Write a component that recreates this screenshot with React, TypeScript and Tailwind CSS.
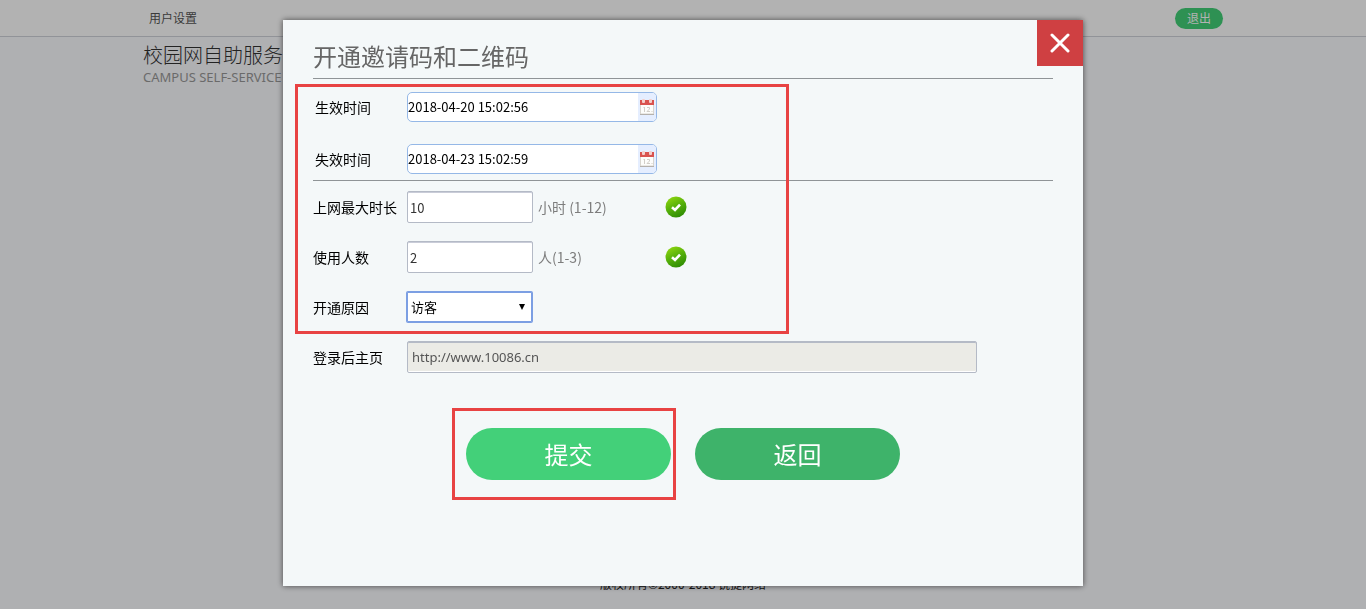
import { useId, useState } from 'react';
import type { ReactNode } from 'react';

const CalendarIcon = () => (
  <svg viewBox="0 0 16 16" className="h-4 w-4" aria-hidden="true">
    <rect x="1.5" y="3.5" width="13" height="11.5" fill="#fdfdfb" stroke="#d8d5cf" />
    <rect x="1" y="15" width="14" height="1" fill="#b5b1ac" />
    <rect x="1" y="1" width="14" height="5" fill="#d9534f" />
    <rect x="3" y="0" width="3" height="4" rx="1" fill="#f3cfcb" />
    <rect x="10" y="0" width="3" height="4" rx="1" fill="#f3cfcb" />
    <path d="M4.5 9l1-1v5M8 8.5h2.500v1.500L8 12.500h3M13 13v-1" fill="none" stroke="#d2cec8" />
  </svg>
);

const CheckBadge = () => {
  const id = useId();
  return (
    <svg viewBox="0 0 22 22" className="h-[22px] w-[22px]" role="img" aria-label="OK">
      <defs>
        <linearGradient id={id} x1="0.2" y1="0" x2="0.7" y2="1">
          <stop offset="0" stopColor="#8ed60f" />
          <stop offset="0.5" stopColor="#55b00a" />
          <stop offset="1" stopColor="#2c8a04" />
        </linearGradient>
      </defs>
      <circle cx="11" cy="11" r="10.500" fill={`url(#${id})`} />
      <path d="M7 11.300l3 2.700 5-5.300" fill="none" stroke="#fff" strokeWidth="2.600" />
    </svg>
  );
};

type RowProps = { label: string; htmlFor: string; children: ReactNode };

const Row = ({ label, htmlFor, children }: RowProps) => (
  <div className="flex h-[50px] items-center">
    <label htmlFor={htmlFor} className="w-[94px] shrink-0">{label}</label>
    {children}
  </div>
);

const DateRow = ({ label, id, initial }: { label: string; id: string; initial: string }) => {
  const [value, setValue] = useState(initial);
  return (
    <div className="flex h-[30px] items-center">
      <label htmlFor={id} className="w-[94px] shrink-0 pl-0.5">{label}</label>
      <div className="flex h-full w-[250px] overflow-hidden rounded-[5px] border border-[#95b8e7] bg-white">
        <input
          id={id}
          type="text"
          value={value}
          onChange={(e) => setValue(e.target.value)}
          className="min-w-0 flex-1 text-[13px] outline-none"
        />
        <button type="button" aria-label="选择日期" className="flex w-[18px] items-center justify-center bg-[#e5eeff]">
          <CalendarIcon />
        </button>
      </div>
    </div>
  );
};

const App = () => {
  const [hours, setHours] = useState('10');
  const [people, setPeople] = useState('2');

  const numberInput = 'h-8 w-[126px] rounded-[2px] border border-[#b4bac6] bg-white px-0.5 text-[13px] text-[#333] shadow-[inset_0_1px_0_#c9ccd8] outline-none';

  return (
    <div className='flex min-h-screen flex-col bg-[#fbfcff] font-["Noto_Sans_CJK_SC",sans-serif] text-[#222]'>
      {/* Top bar */}
      <header className="border-b border-[#d0d3da] bg-white">
        <div className="mx-auto flex h-9 max-w-[1080px] items-center justify-between text-xs">
          <a href="#settings" className="pl-1.5 text-[#555]">用户设置</a>
          <button type="button" className="h-[21px] rounded-full bg-[#42d078] px-3 text-white">退出</button>
        </div>
      </header>

      {/* Logo */}
      <div className="mx-auto w-full max-w-[1080px] pt-1.5">
        <div className="text-xl leading-6 font-light text-[#333]">校园网自助服务</div>
        <div className='font-["Noto_Sans"] text-[13px] leading-5 text-[#999]'>CAMPUS SELF-SERVICE</div>
      </div>

      <footer className="mt-auto pb-4 text-center text-xs leading-[18px]">版权所有©2000-2018 锐捷网络</footer>

      {/* Dialog */}
      <div className="fixed inset-0 flex items-start justify-center bg-black/30 pt-5">
        <div
          role="dialog"
          aria-labelledby="dialog-title"
          className="w-full max-w-[800px] bg-[#f4f8f9] pb-[86px] text-sm text-black shadow-[0_0_6px_rgba(0,0,0,0.6)]"
        >
          <div className="flex h-[58px] items-start justify-between pl-[30px]">
            <h1 id="dialog-title" className="pt-4 text-2xl leading-10 text-[#666]">开通邀请码和二维码</h1>
            <button type="button" aria-label="关闭" className="flex h-[46px] w-[46px] items-center justify-center bg-[#cf4042]">
              <svg viewBox="0 0 20 20" className="h-5 w-5" fill="none" stroke="#fff" strokeWidth="3" strokeLinecap="round">
                <path d="M2 2l16 16M18 2L2 18" />
              </svg>
            </button>
          </div>

          <form className="px-[30px]" onSubmit={(e) => e.preventDefault()}>
            <div className="relative">
              <div className="mb-px flex flex-col gap-[22px] border-y border-[#8f9497] pt-[13px] pb-1.5">
                <DateRow label="生效时间" id="start" initial="2018-04-20 15:02:56" />
                <DateRow label="失效时间" id="end" initial="2018-04-23 15:02:59" />
              </div>

              <Row label="上网最大时长" htmlFor="hours">
                <input id="hours" type="text" value={hours} onChange={(e) => setHours(e.target.value)} className={numberInput} />
                <span className="w-[132px] pl-[5px] text-[#7d7d7d]">小时 (1-12)</span>
                <CheckBadge />
              </Row>
              <Row label="使用人数" htmlFor="people">
                <input id="people" type="text" value={people} onChange={(e) => setPeople(e.target.value)} className={numberInput} />
                <span className="w-[132px] pl-[5px] text-[#7d7d7d]">人(1-3)</span>
                <CheckBadge />
              </Row>
              <Row label="开通原因" htmlFor="reason">
                <div className="relative">
                  <select
                    id="reason"
                    className="h-[30px] w-[125px] appearance-none rounded-[1px] border border-[#7c9fe3] bg-white pl-[3px] text-[13px] ring-1 ring-[#7c9fe3] outline-none"
                  >
                    <option>访客</option>
                  </select>
                  <svg viewBox="0 0 6 6" className="pointer-events-none absolute top-3 right-[7px] h-1.5 w-1.5" aria-hidden="true">
                    <path d="M0 0h6L3 6z" />
                  </svg>
                </div>
              </Row>

              {/* Highlight frame around the fields */}
              <div className="pointer-events-none absolute top-1.5 -bottom-0.5 -left-[18px] w-[494px] border-3 border-[#e84343]" />
            </div>

            <Row label="登录后主页" htmlFor="homepage">
              <input
                id="homepage"
                type="text"
                readOnly
                value="http://www.10086.cn"
                className='h-8 w-[570px] rounded-[2px] border border-[#b4bac6] bg-[#ebebe6] px-1 font-["Noto_Sans"] text-[13px] text-[#555] shadow-[inset_0_1px_0_#b4bac6,inset_0_-1px_0_#fff] outline-none'
              />
            </Row>

            <div className="mt-[26px] flex items-center gap-[19px] pl-[139px] text-2xl text-white">
              <div className="border-3 border-[#e84343] py-[17px] pr-0.5 pl-[11px]">
                <button type="submit" className="h-[52px] w-[205px] rounded-full bg-[#43d079]">提交</button>
              </div>
              <button type="button" className="h-[52px] w-[205px] rounded-full bg-[#3eb36a]">返回</button>
            </div>
          </form>
        </div>
      </div>
    </div>
  );
};

export default App;
